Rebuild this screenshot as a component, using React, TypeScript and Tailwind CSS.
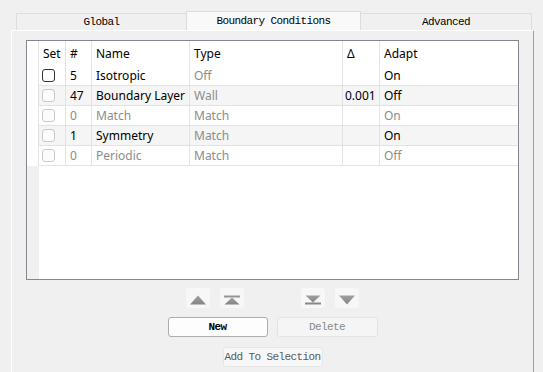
import React from "react";

type Row = {
  checked?: boolean;
  enabled: boolean;
  num: string;
  name: string;
  type: string;
  delta: string;
  adapt: string;
};

const rows: Row[] = [
  { checked: false, enabled: true, num: "5", name: "Isotropic", type: "Off", delta: "", adapt: "On" },
  { enabled: true, num: "47", name: "Boundary Layer", type: "Wall", delta: "0.001", adapt: "Off" },
  { enabled: false, num: "0", name: "Match", type: "Match", delta: "", adapt: "On" },
  { enabled: true, num: "1", name: "Symmetry", type: "Match", delta: "", adapt: "On" },
  { enabled: false, num: "0", name: "Periodic", type: "Match", delta: "", adapt: "Off" },
];

const mono = { fontFamily: '"Liberation Mono", "Courier New", monospace' };

function Tri({ kind }: { kind: "up" | "top" | "bottom" | "down" }) {
  const fill = "url(#g" + kind + ")";
  return (
    <svg width="24" height="20" viewBox="0 0 24 20">
      <defs>
        <linearGradient id={"g" + kind} x1="0" y1="0" x2="0" y2="1">
          <stop offset="0" stopColor="#a0a0a0" />
          <stop offset="1" stopColor="#858585" />
        </linearGradient>
      </defs>
      {kind === "up" && <polygon points="12,7.5 20,16.5 4,16.5" fill={fill} />}
      {kind === "down" && <polygon points="4,7.5 20,7.5 12,16.5" fill={fill} />}
      {kind === "top" && (
        <>
          <rect x="4" y="7.5" width="16" height="2" fill="#959595" />
          <polygon points="12,9.5 19.5,16.5 4.5,16.5" fill={fill} />
        </>
      )}
      {kind === "bottom" && (
        <>
          <polygon points="4.5,7.5 19.5,7.5 12,14.5" fill={fill} />
          <rect x="4" y="14.5" width="16" height="2" fill="#888888" />
        </>
      )}
    </svg>
  );
}

function ArrowBtn({ kind }: { kind: "up" | "top" | "bottom" | "down" }) {
  return (
    <div className="w-[24px] h-[20px] rounded-[3px] bg-[#f7f7f7] flex items-center justify-center">
      <Tri kind={kind} />
    </div>
  );
}

const cols = "grid grid-cols-[12px_27px_26px_98px_153px_37px_1fr]";
const cell = "border-r border-[#e3e3e3] pl-[4px] flex items-center whitespace-nowrap overflow-hidden";

export default function App() {
  return (
    <div
      className="w-[543px] h-[372px] bg-[#f0f0f0] overflow-hidden flex flex-col text-black"
      style={{ fontFamily: '"Noto Sans", sans-serif' }}
    >
      {/* Tabs */}
      <div className="h-[30px] flex items-end pl-[16px] text-[11px] tracking-[-0.6px]" style={mono}>
        <div className="w-[170px] h-[17px] border-l border-t border-[#dedede] bg-[#f0f0f0] flex items-center justify-center">
          Global
        </div>
        <div className="w-[175px] h-[19px] border-l border-r border-t border-[#dcdcdc] bg-[#f9f9f9] flex items-center justify-center">
          Boundary Conditions
        </div>
        <div className="w-[171px] h-[17px] border-t border-r border-[#dedede] bg-[#f0f0f0] flex items-center justify-center">
          Advanced
        </div>
      </div>

      {/* Panel */}
      <div className="ml-[11px] w-[523px] flex-1 border-l border-t border-white border-r border-r-[#a0a0a0] pl-[14px] pt-[9px] flex flex-col">
        {/* Table */}
        <div className="w-[493px] h-[240px] border border-[#828790] bg-white flex flex-col text-[12px]">
          <div className={cols + " h-[25px]"}>
            <div className="border-r border-[#e3e3e3]" />
            <div className={cell}>Set</div>
            <div className={cell}>#</div>
            <div className={cell}>Name</div>
            <div className={cell}>Type</div>
            <div className={cell}>Δ</div>
            <div className="pl-[4px] flex items-center">Adapt</div>
          </div>
          {rows.map((r, i) => {
            const alt = i % 2 === 1;
            const bg = alt ? " bg-[#f5f5f5]" : " bg-white";
            const txt = r.enabled ? " text-black" : " text-[#8c8c8c]";
            return (
              <div key={i} className={cols + " h-[20px]"}>
                <div className="border-r border-[#e3e3e3] bg-white" />
                <div className={"border-r border-b border-[#e3e3e3] pl-[3px] flex items-center" + bg}>
                  <div
                    className={
                      "w-[13px] h-[13px] rounded-[3px] border " +
                      (i === 0 ? "border-[#333333] bg-white" : "border-[#c9c9c9] bg-[#fcfcfc]")
                    }
                  />
                </div>
                <div className={cell + " border-b" + txt + bg}>{r.num}</div>
                <div className={cell + " border-b" + txt + bg}>{r.name}</div>
                <div className={cell + " border-b text-[#8c8c8c]" + bg}>{r.type}</div>
                <div className={cell + " border-b !pl-[2px]" + txt + bg}>{r.delta}</div>
                <div className={"pl-[4px] flex items-center border-b border-[#e3e3e3]" + txt + bg}>{r.adapt}</div>
              </div>
            );
          })}
          <div className="flex-1 flex">
            <div className="w-[12px] bg-[#f0f0f0]" />
            <div className="flex-1" />
          </div>
        </div>

        {/* Buttons */}
        <div className="w-[493px] flex flex-col items-center pt-[8px]">
          <div className="flex items-center">
            <ArrowBtn kind="up" />
            <div className="w-[10px]" />
            <ArrowBtn kind="top" />
            <div className="w-[57px]" />
            <ArrowBtn kind="bottom" />
            <div className="w-[10px]" />
            <ArrowBtn kind="down" />
          </div>
          <div className="flex items-center gap-[9px] mt-[9px] text-[11px] tracking-[-0.6px]" style={mono}>
            <div className="w-[100px] h-[20px] rounded-[3px] border border-[#adadad] bg-[#fdfdfd] flex items-center justify-center font-bold">
              New
            </div>
            <div className="w-[101px] h-[20px] rounded-[3px] border border-[#e3e3e3] bg-[#f5f5f5] flex items-center justify-center text-[#8a8a8a]">
              Delete
            </div>
          </div>
          <div
            className="mt-[10px] w-[100px] h-[20px] rounded-[3px] border border-[#e6e6e6] bg-[#f7f7f7] flex items-center justify-center text-[11px] tracking-[-0.6px] text-[#5a5a5a]"
            style={mono}
          >
            Add To Selection
          </div>
        </div>
      </div>
    </div>
  );
}
